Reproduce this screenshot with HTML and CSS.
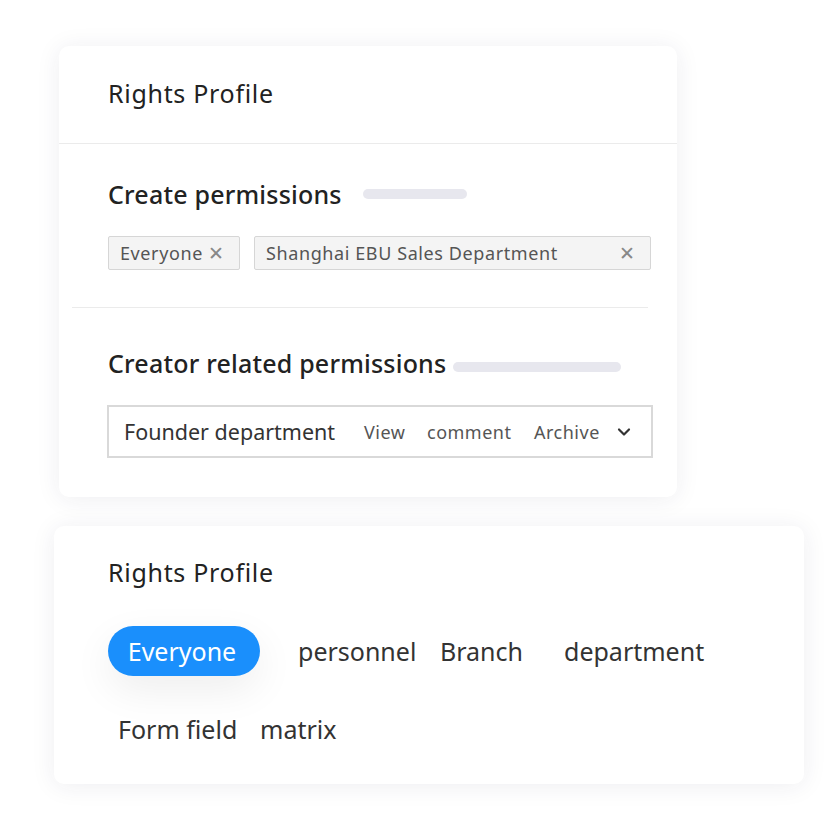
FILE: index.html
```html
<!DOCTYPE html>
<html>
<head>
<meta charset="utf-8">
<link rel="stylesheet" href="styles.css">
</head>
<body>
<div class="page">
  <div class="card card-top">
    <div class="card-header">
      <div class="title">Rights Profile</div>
    </div>
    <div class="section first">
      <div class="heading-row">
        <span class="heading">Create permissions</span>
        <span class="bar bar-short"></span>
      </div>
      <div class="tags">
        <div class="tag tag-small"><span>Everyone</span><span class="x">✕</span></div>
        <div class="tag tag-wide"><span>Shanghai EBU Sales Department</span><span class="x">✕</span></div>
      </div>
    </div>
    <div class="divider"></div>
    <div class="section second">
      <div class="heading-row">
        <span class="heading">Creator related permissions</span>
        <span class="bar bar-long"></span>
      </div>
      <div class="select">
        <span class="select-main">Founder department</span>
        <span class="opt opt-view">View</span>
        <span class="opt opt-comment">comment</span>
        <span class="opt opt-archive">Archive</span>
        <svg class="chev" width="14" height="10" viewBox="0 0 14 10"><path d="M2 2.5 L7 7.5 L12 2.5" fill="none" stroke="#333" stroke-width="2.2" stroke-linecap="round" stroke-linejoin="round"/></svg>
      </div>
    </div>
  </div>

  <div class="card card-bottom">
    <div class="title title-bottom">Rights Profile</div>
    <div class="choice-row row1">
      <div class="pill">Everyone</div>
      <div class="choice c-personnel">personnel</div>
      <div class="choice c-branch">Branch</div>
      <div class="choice c-dept">department</div>
    </div>
    <div class="choice-row row2">
      <div class="choice c-form">Form field</div>
      <div class="choice c-matrix">matrix</div>
    </div>
  </div>
</div>
</body>
</html>
```

FILE: styles.css
```css
* { box-sizing: border-box; }
html, body {
  margin: 0;
  padding: 0;
  background: #ffffff;
  font-family: "Noto Sans", "Liberation Sans", sans-serif;
  color: #222;
}
.page {
  width: 840px;
  height: 840px;
  display: flex;
  flex-direction: column;
  padding-top: 46px;
}
.card {
  background: #fff;
  border-radius: 10px;
  box-shadow: 0 2px 24px rgba(40, 40, 80, 0.08);
}
.card-top {
  margin-left: 59px;
  width: 618px;
  height: 451px;
}
.card-header {
  height: 98px;
  display: flex;
  align-items: center;
  padding-left: 49px;
  padding-bottom: 3px;
  border-bottom: 1px solid #ebebeb;
}
.title {
  font-size: 25px;
  color: #222;
  letter-spacing: 0.7px;
}
.section {
  padding-left: 49px;
  padding-right: 26px;
}
.section.first { padding-top: 35px; }
.heading-row {
  display: flex;
  align-items: center;
  height: 30px;
}
.heading {
  font-size: 25px;
  font-weight: 500;
  color: #222;
  letter-spacing: 0.2px;
}
.bar {
  display: inline-block;
  height: 10px;
  border-radius: 5px;
  background: #e7e7ee;
}
.bar-short { width: 104px; margin-left: 21px; }
.bar-long { width: 168px; margin-left: 7px; margin-top: 8px; }
.tags {
  display: flex;
  gap: 14px;
  margin-top: 27px;
}
.tag {
  height: 34px;
  background: #f4f4f4;
  border: 1px solid #d6d6d6;
  border-radius: 2px;
  display: flex;
  align-items: center;
  justify-content: space-between;
  padding: 0 14px 0 11px;
  font-size: 18px;
  letter-spacing: 0.6px;
  color: #555;
}
.tag-small { width: 132px; }
.tag-wide { width: 397px; }
.x {
  font-size: 19px;
  color: #888;
}
.divider {
  height: 1px;
  background: #ebebeb;
  margin: 37px 29px 0 13px;
}
.section.second { padding-top: 40px; }
.select {
  margin-top: 27px;
  margin-left: -1px;
  width: 546px;
  height: 53px;
  border: 2px solid #d9d9d9;
  display: flex;
  align-items: center;
  padding-left: 15px;
}
.select-main {
  font-size: 21.5px;
  color: #333;
  width: 240px;
}
.opt {
  font-size: 18px;
  letter-spacing: 0.5px;
  color: #555;
}
.opt-view { width: 63px; }
.opt-comment { width: 107px; }
.opt-archive { width: 83px; }
.chev { margin-left: 0; }

.card-bottom {
  margin-top: 29px;
  margin-left: 54px;
  width: 750px;
  height: 258px;
  padding-left: 54px;
  padding-top: 30px;
}
.title-bottom {
  height: 32px;
  line-height: 32px;
}
.choice-row {
  display: flex;
  align-items: center;
}
.row1 { margin-top: 38px; height: 50px; }
.row2 { margin-top: 28px; height: 50px; }
.pill {
  width: 152px;
  height: 50px;
  border-radius: 25px;
  background: #1a8ffc;
  color: #fff;
  font-size: 25px;
  display: flex;
  align-items: center;
  justify-content: center;
  padding-right: 4px;
  box-shadow: 0 14px 40px rgba(0, 0, 0, 0.07);
}
.choice {
  font-size: 25px;
  color: #333;
}
.c-personnel { margin-left: 38px; width: 142px; }
.c-branch { width: 124px; }
.c-form { margin-left: 10px; width: 142px; }
```
